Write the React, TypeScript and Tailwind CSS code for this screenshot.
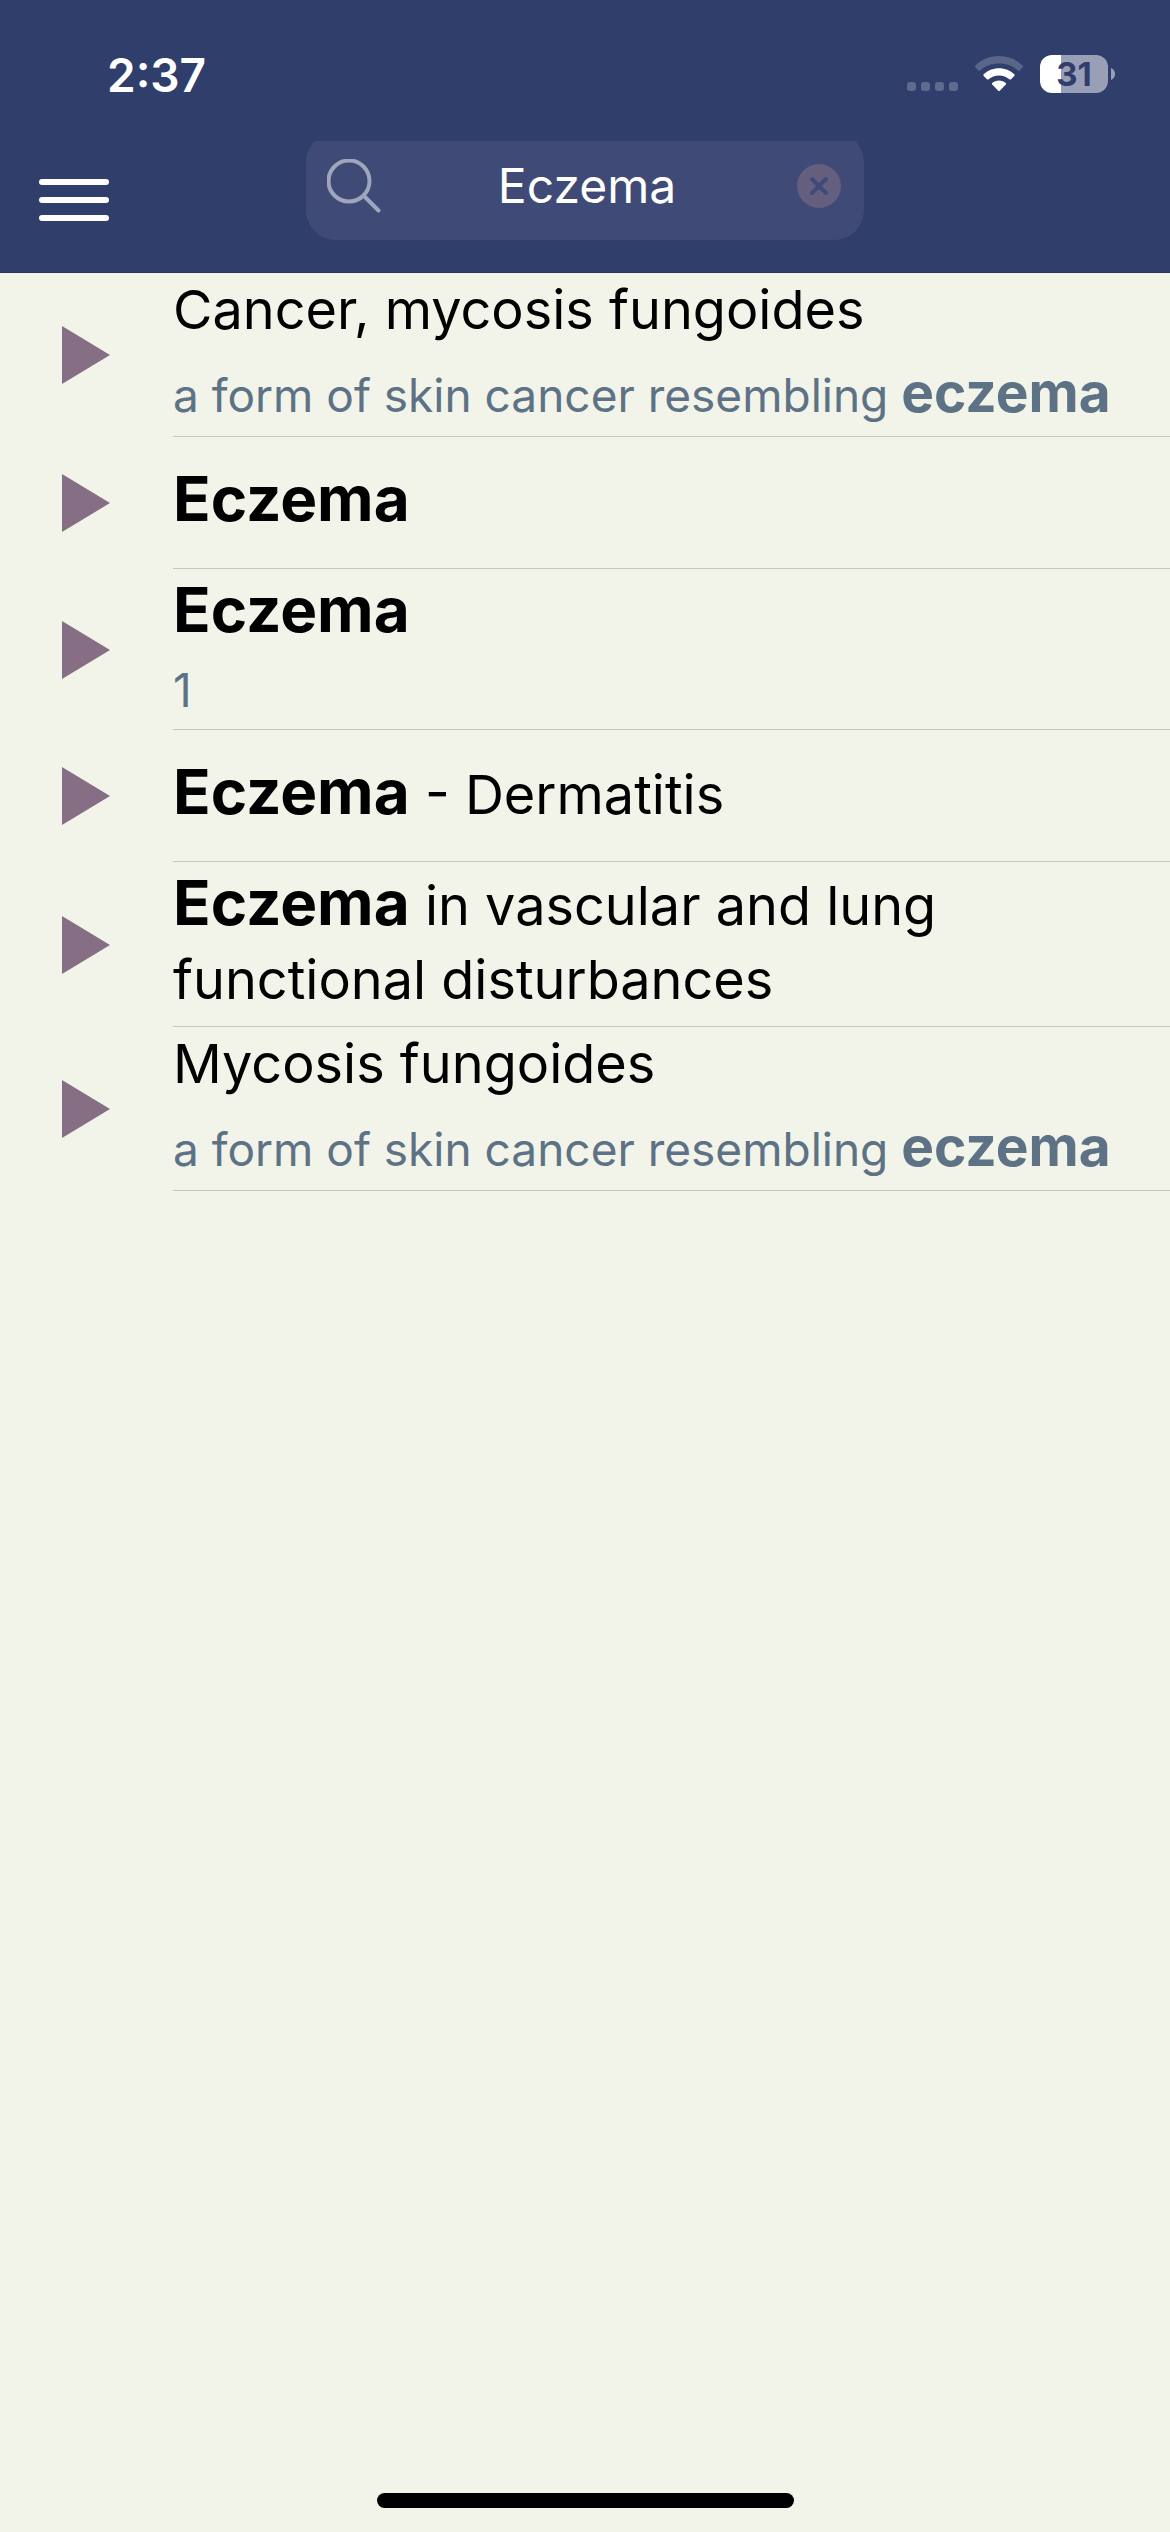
import { useState, type ReactNode } from "react";

type Result = { title: string; note?: string };

const results: Result[] = [
  { title: "Cancer, mycosis fungoides", note: "a form of skin cancer resembling eczema" },
  { title: "Eczema" },
  { title: "Eczema", note: "1" },
  { title: "Eczema - Dermatitis" },
  { title: "Eczema in vascular and lung functional disturbances" },
  { title: "Mycosis fungoides", note: "a form of skin cancer resembling eczema" },
];

/** Wraps each occurrence of the search term in a <strong>. */
function highlight(text: string, className: string): ReactNode[] {
  return text.split(/(eczema)/i).map((part, i) =>
    /^eczema$/i.test(part) ? (
      <strong key={i} className={className}>
        {part}
      </strong>
    ) : (
      part
    ),
  );
}

function StatusBar() {
  return (
    <div className="flex h-[141px] items-start justify-between pr-[55px] pl-[107px]">
      <time className="pt-[46px] text-[46px] leading-[58px] font-semibold text-white">2:37</time>
      <div className="flex items-center pt-[55px]">
        <div className="flex gap-[5px] self-end pb-0.5" aria-label="No signal">
          {[0, 1, 2, 3].map((n) => (
            <span key={n} className="size-[9px] rounded-[3px] bg-[#5f6a8e]" />
          ))}
        </div>
        <svg className="ml-4 h-[38px] w-[50px]" viewBox="0 0 50 38" aria-label="Wi-Fi">
          <path d="M25 1C15.700 1 7.200 4.700 1.200 10.700Q0.400 11.500 1.200 12.300L4.400 15.500Q5.200 16.300 6 15.500C11 10.900 17.700 8.400 25 8.400S39 10.900 44 15.500Q44.800 16.300 45.600 15.500L48.800 12.300Q49.600 11.500 48.800 10.700C42.800 4.700 34.300 1 25 1Z" fill="#596689" />
          <path d="M25 13.300C19 13.300 13.700 15.600 9.700 19.300Q8.900 20.100 9.700 20.900L13 24.200Q13.800 25 14.600 24.300C17.400 21.900 21 20.500 25 20.500S32.600 21.900 35.400 24.300Q36.200 25 37 24.200L40.300 20.900Q41.100 20.100 40.300 19.300C36.300 15.600 31 13.300 25 13.300Z" fill="#fff" />
          <path d="M25 25.500C22.300 25.500 20 26.500 18.200 28Q17.400 28.800 18.200 29.600L24.200 35.700Q25 36.400 25.800 35.700L31.800 29.600Q32.600 28.800 31.800 28C30 26.500 27.700 25.500 25 25.500Z" fill="#fff" />
        </svg>
        <div className="ml-4 flex h-[38px] w-[68px] items-center justify-center rounded-[12px] bg-linear-to-r from-white from-[31%] to-[#9a9fb8] to-[31%] text-[33px] leading-none font-bold text-[#303e6b]">
          31
        </div>
        <svg className="ml-[3px] h-3 w-1" viewBox="0 0 4 12" aria-hidden="true">
          <path d="M0 0C2.500 1 4 3.200 4 6S2.500 11 0 12Z" fill="#9a9fb8" />
        </svg>
      </div>
    </div>
  );
}

function SearchBar() {
  const [query, setQuery] = useState("Eczema");
  return (
    <div className="grid grid-cols-[1fr_558px_1fr] items-start pb-8">
      <button type="button" aria-label="Menu" className="ml-[39px] mt-[38px] flex w-[70px] flex-col gap-3">
        <span className="h-1.5 rounded-full bg-white" />
        <span className="h-1.5 rounded-full bg-white" />
        <span className="h-1.5 rounded-full bg-white" />
      </button>
      <div className="overflow-hidden">
        <label className="-mt-[9px] flex h-[108px] items-center rounded-[30px] bg-[#3f4b76] pr-[23px] pl-[21px]">
          <svg className="h-[54px] w-[54px] shrink-0" viewBox="0 0 54 54" fill="none" stroke="#9fa5bb" strokeWidth="4" strokeLinecap="round" aria-hidden="true">
            <circle cx="22" cy="22" r="20.500" />
            <path d="M37 37L51.500 51.500" />
          </svg>
          <input
            type="text"
            aria-label="Search"
            value={query}
            onChange={(e) => setQuery(e.target.value)}
            className="h-[64px] min-w-0 flex-1 bg-transparent pr-1 text-center text-[48px] leading-[64px] text-white outline-none"
          />
          <button type="button" aria-label="Clear search" onClick={() => setQuery("")} className="size-[44px] shrink-0">
            <svg viewBox="0 0 44 44" aria-hidden="true">
              <circle cx="22" cy="22" r="22" fill="#645e7f" />
              <path d="M15 15L29 29M29 15L15 29" stroke="#3f4b76" strokeWidth="4" strokeLinecap="round" />
            </svg>
          </button>
        </label>
      </div>
    </div>
  );
}

function ResultRow({ title, note }: Result) {
  return (
    <li className="flex items-stretch">
      <button type="button" aria-label={`Expand ${title}`} className="flex w-[173px] shrink-0 items-center pl-[62px]">
        <svg className="h-[58px] w-12" viewBox="0 0 48 58" aria-hidden="true">
          <path d="M0 0L48 29L0 58Z" fill="#866e84" />
        </svg>
      </button>
      <a href="#result" className="flex min-h-[132px] flex-1 flex-col justify-center border-b border-[#c5c6c9] pr-12 pb-[9px]">
        <span className="block text-[54px] leading-[74px] text-black">
          {highlight(title, "text-[62px] leading-[81px] font-bold")}
        </span>
        {note && (
          <span className="mt-4 mb-1.5 block text-[46px] leading-[48px] text-[#5d7285]">
            {highlight(note, "text-[55px] leading-[58px] font-bold")}
          </span>
        )}
      </a>
    </li>
  );
}

export default function App() {
  return (
    <div className="flex min-h-screen flex-col bg-[#f2f4ea] font-['Inter',sans-serif]">
      <header className="border-b border-[#28345d] bg-[#303e6b]">
        <StatusBar />
        <SearchBar />
      </header>
      <main className="flex-1">
        <ul>
          {results.map((result, i) => (
            <ResultRow key={i} {...result} />
          ))}
        </ul>
      </main>
      <div className="mx-auto mb-6 h-[15px] w-[417px] rounded-full bg-black" />
    </div>
  );
}
